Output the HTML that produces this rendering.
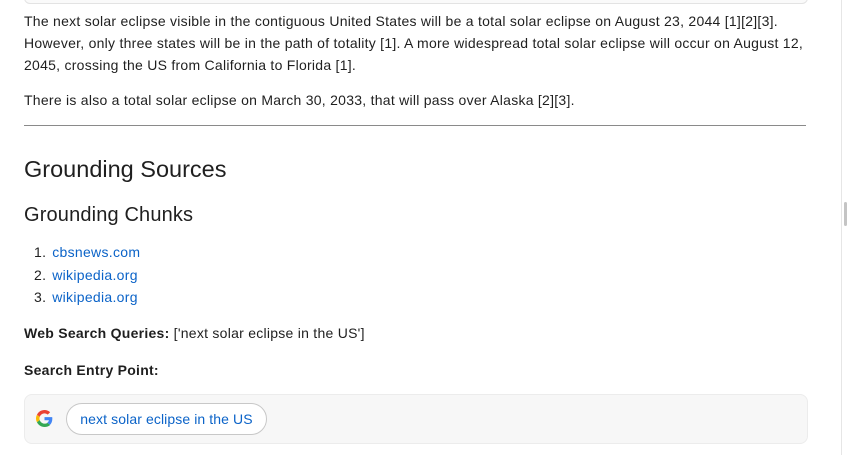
<!DOCTYPE html>
<html><head><style>
body{margin:0;width:847px;height:455px;overflow:hidden;background:#fff;font-family:"Liberation Sans",sans-serif;color:#1f1f1f;position:relative}
.t{position:absolute;left:24px;font-size:14px;letter-spacing:0.26px;white-space:nowrap}
a{color:#0b63c8;text-decoration:none}
</style></head><body>
<div style="position:absolute;left:24px;top:-10px;width:782px;height:12px;border:1px solid #e3e3e3;border-radius:6px;background:#fafafa"></div>
<div class="t" style="top:10px;line-height:22px">The next solar eclipse visible in the contiguous United States will be a total solar eclipse on August 23, 2044 [1][2][3].<br>However, only three states will be in the path of totality [1]. A more widespread total solar eclipse will occur on August 12,<br>2045, crossing the US from California to Florida [1].</div>
<div class="t" style="top:92px">There is also a total solar eclipse on March 30, 2033, that will pass over Alaska [2][3].</div>
<div style="position:absolute;left:24px;top:125px;width:782px;height:1px;background:#8a8a8a"></div>
<div class="t" style="top:156px;font-size:23.5px;letter-spacing:0">Grounding Sources</div>
<div class="t" style="top:204px;font-size:20px;letter-spacing:0.15px">Grounding Chunks</div>
<div class="t" style="top:241px;left:34px;line-height:22.5px;letter-spacing:0.3px"><span style="display:inline-block;width:14px">1.</span> <a>cbsnews.com</a><br><span style="display:inline-block;width:14px">2.</span> <a>wikipedia.org</a><br><span style="display:inline-block;width:14px">3.</span> <a>wikipedia.org</a></div>
<div class="t" style="top:325px"><b>Web Search Queries:</b> ['next solar eclipse in the US']</div>
<div class="t" style="top:362px"><b>Search Entry Point:</b></div>
<div style="position:absolute;left:24px;top:394px;width:782px;height:48px;border:1px solid #ececec;border-radius:8px;background:#f7f7f7"></div>
<svg style="position:absolute;left:36px;top:410px" width="17" height="17" viewBox="0 0 48 48"><path fill="#EA4335" d="M24 9.5c3.5 0 6.6 1.2 9.1 3.6l6.8-6.8C35.8 2.4 30.2 0 24 0 14.6 0 6.6 5.4 2.7 13.3l7.9 6.1C12.5 13.6 17.8 9.5 24 9.5z"/><path fill="#4285F4" d="M46.1 24.5c0-1.6-.1-3.1-.4-4.5H24v9h12.4c-.5 2.9-2.2 5.3-4.6 6.9l7.7 6c4.5-4.1 6.6-10.2 6.6-17.4z"/><path fill="#FBBC05" d="M10.5 28.6c-.5-1.4-.8-3-.8-4.6s.3-3.2.8-4.6l-7.9-6.1C1 16.5 0 20.1 0 24s1 7.5 2.7 10.7l7.8-6.1z"/><path fill="#34A853" d="M24 48c6.5 0 11.9-2.1 15.9-5.8l-7.7-6c-2.2 1.5-5 2.3-8.2 2.3-6.2 0-11.5-4.2-13.4-9.9l-7.9 6.1C6.6 42.6 14.6 48 24 48z"/></svg>
<div style="position:absolute;left:66px;top:403px;width:199px;height:30px;border:1px solid #c8c8c8;border-radius:16px;background:#fff;font-size:14px;letter-spacing:0.1px;line-height:30px;text-align:center;color:#0b63c8">next solar eclipse in the US</div>
<div style="position:absolute;left:841px;top:0;width:1px;height:455px;background:#e6e6e6"></div>
<div style="position:absolute;left:844px;top:202px;width:3px;height:24px;background:#c4c4c4;border-radius:2px"></div>
</body></html>
